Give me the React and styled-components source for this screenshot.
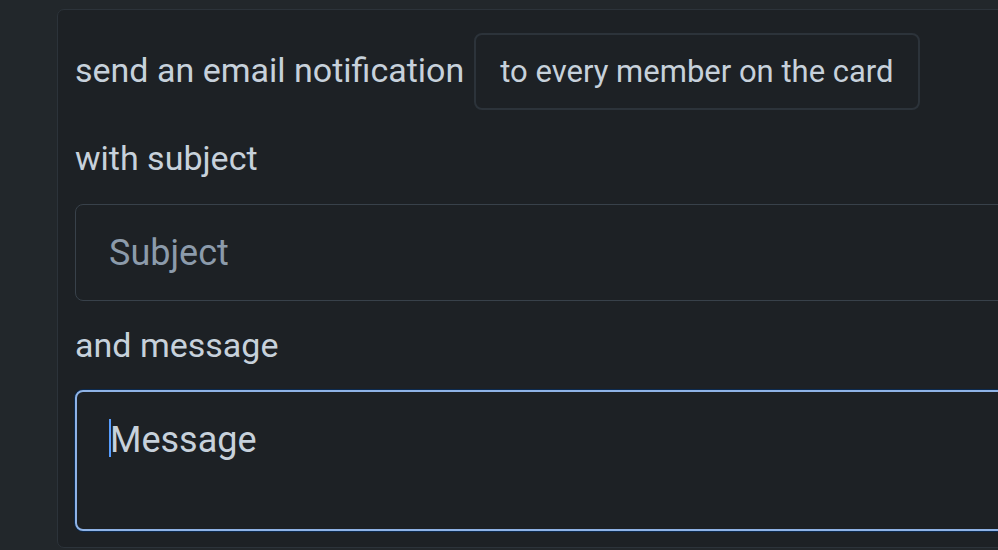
import React from "react";
import styled, { createGlobalStyle } from "styled-components";

const GlobalStyle = createGlobalStyle`
  html, body {
    margin: 0;
    padding: 0;
    background: #22272b;
    overflow: hidden;
  }
  body {
    font-family: Roboto, "Noto Sans", "Liberation Sans", sans-serif;
  }
`;

const Page = styled.div`
  width: 998px;
  height: 550px;
  overflow: hidden;
  padding: 9px 0 0 57px;
  box-sizing: border-box;
`;

const Panel = styled.section`
  width: 1080px;
  box-sizing: border-box;
  background: #1d2125;
  border: 1px solid #2c333a;
  border-radius: 7px;
  padding: 23px 18px 16px 17px;
  display: flex;
  flex-direction: column;
`;

const Row = styled.div`
  display: flex;
  align-items: center;
  gap: 10px;
`;

const Label = styled.div`
  color: #c7d1db;
  font-size: 34px;
  line-height: 44px;
  margin-top: ${props => props.$top || 0}px;
  margin-bottom: ${props => props.$bottom || 0}px;
`;

const Pill = styled.button`
  font-family: inherit;
  font-size: 31px;
  color: #c7d1db;
  background: #1d2125;
  border: 2px solid #2c333a;
  border-radius: 8px;
  height: 77px;
  padding: 0 24px;
  cursor: pointer;
`;

const Field = styled.input`
  margin-top: 24px;
  height: 97px;
  box-sizing: border-box;
  width: 100%;
  background: #1d2125;
  border: 1px solid #38414a;
  border-radius: 8px;
  padding: 0 33px;
  font-family: inherit;
  font-size: 36px;
  color: #c7d1db;
  outline: none;
  &::placeholder {
    color: #8c9bab;
  }
`;

const AreaWrap = styled.div`
  position: relative;
  margin-top: 23px;
`;

const Area = styled.textarea`
  display: block;
  height: 141px;
  box-sizing: border-box;
  width: 100%;
  resize: none;
  background: #1d2125;
  border: 2px solid #8fb3e6;
  border-radius: 8px;
  padding: 26px 33px;
  font-family: inherit;
  font-size: 36px;
  line-height: 44px;
  color: #c7d1db;
  caret-color: transparent;
  outline: none;
  box-shadow: 0 0 0 1px #0c2a4f;
  &::placeholder {
    color: #c7d1db;
  }
`;

const Caret = styled.span`
  position: absolute;
  left: 34px;
  top: 29px;
  width: 2px;
  height: 38px;
  background: #579dff;
  pointer-events: none;
`;

export default function App() {
  return (
    <>
      <GlobalStyle />
      <Page>
        <Panel>
          <Row>
            <Label $bottom={4}>send an email notification</Label>
            <Pill>to every member on the card</Pill>
          </Row>
          <Label $top={26}>with subject</Label>
          <Field placeholder="Subject" />
          <Label $top={22}>and message</Label>
          <AreaWrap>
            <Area placeholder="Message" />
            <Caret />
          </AreaWrap>
        </Panel>
      </Page>
    </>
  );
}
